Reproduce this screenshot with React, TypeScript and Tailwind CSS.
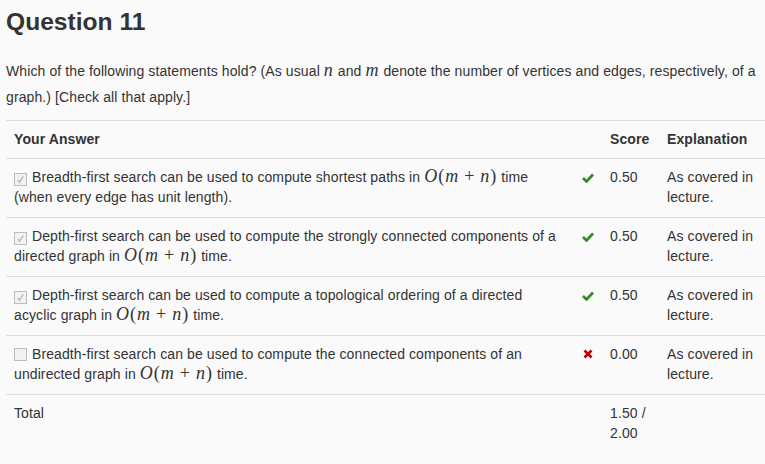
import type { ReactNode } from "react";

function V({ children }: { children: ReactNode }) {
    return <span className="font-['Liberation_Serif',serif] italic text-[18px] leading-none tracking-[1px]">{children}</span>;
}

function BigO() {
    return (
        <span className="font-['Liberation_Serif',serif] text-[18px] leading-none whitespace-nowrap tracking-[1px]">
            <span className="italic">O</span>(<span className="italic">m</span>
            <span className="mx-[5px]">+</span>
            <span className="italic">n</span>)
        </span>
    );
}

function Box({ checked }: { checked: boolean }) {
    return (
        <span className="inline-flex items-center justify-center w-[13px] h-[13px] border border-[#bdbdbd] bg-[#f2f2f2] align-[-2px] mr-[5px]">
            {checked && (
                <svg viewBox="0 0 10 10" className="w-[9px] h-[9px]">
                    <path d="M2 5.5 L4 8 L8 1.5" fill="none" stroke="#b0b0b0" strokeWidth="1.3" />
                </svg>
            )}
        </span>
    );
}

function Tick() {
    return (
        <svg viewBox="0 0 12 10" className="w-[12px] h-[10px] mt-[6px]">
            <path d="M1 5 L4.5 8.5 L11 1.5" fill="none" stroke="#2f8a1f" strokeWidth="2.6" />
        </svg>
    );
}

function Cross() {
    return (
        <svg viewBox="0 0 10 10" className="w-[10px] h-[10px] mt-[5px]">
            <path d="M1.5 1.5 L8.5 8.5 M8.5 1.5 L1.5 8.5" fill="none" stroke="#c40000" strokeWidth="2.6" />
        </svg>
    );
}

const rows: { checked: boolean; ok: boolean; score: string; text: ReactNode }[] = [
    {
        checked: true,
        ok: true,
        score: "0.50",
        text: <>Breadth-first search can be used to compute shortest paths in <BigO /> time (when every edge has unit length).</>,
    },
    {
        checked: true,
        ok: true,
        score: "0.50",
        text: <>Depth-first search can be used to compute the strongly connected components of a directed graph in <BigO /> time.</>,
    },
    {
        checked: true,
        ok: true,
        score: "0.50",
        text: <>Depth-first search can be used to compute a topological ordering of a directed acyclic graph in <BigO /> time.</>,
    },
    {
        checked: false,
        ok: false,
        score: "0.00",
        text: <>Breadth-first search can be used to compute the connected components of an undirected graph in <BigO /> time.</>,
    },
];

const grid = "grid grid-cols-[567px_29px_57px_1fr] border-t border-[#dddddd]";

export default function App() {
    return (
        <div className="min-h-screen bg-[#fafafa] pl-[6px] text-[#333333] font-['Liberation_Sans',Arial,sans-serif] text-[14px] tracking-[0.1px] overflow-hidden">
            <div className="w-[759px]">
                <h1 className="pt-[9px] text-[24.6px] leading-[26px] font-bold tracking-normal">Question 11</h1>
                <p className="mt-[23px] leading-[26px]">
                    Which of the following statements hold? (As usual <V>n</V> and <V>m</V> denote the number of vertices and edges, respectively, of a graph.) [Check all that apply.]
                </p>

                <div className="mt-[10px] leading-[20px]">
                    <div className={grid + " font-bold"}>
                        <div className="px-2 pt-2 pb-[9px]">Your Answer</div>
                        <div />
                        <div className="px-2 pt-2 pb-[9px]">Score</div>
                        <div className="px-2 pt-2 pb-[9px]">Explanation</div>
                    </div>
                    {rows.map((r, i) => (
                        <div key={i} className={grid}>
                            <div className="px-2 pt-2 pb-[10px]">
                                <Box checked={r.checked} />
                                {r.text}
                            </div>
                            <div className="px-2 pt-2 flex justify-center">{r.ok ? <Tick /> : <Cross />}</div>
                            <div className="px-2 pt-2">{r.score}</div>
                            <div className="px-2 pt-2 pr-[10px]">As covered in lecture.</div>
                        </div>
                    ))}
                    <div className={grid}>
                        <div className="px-2 pt-2 pb-[10px]">Total</div>
                        <div />
                        <div className="px-2 pt-2">1.50 / 2.00</div>
                        <div />
                    </div>
                </div>
            </div>
        </div>
    );
}
